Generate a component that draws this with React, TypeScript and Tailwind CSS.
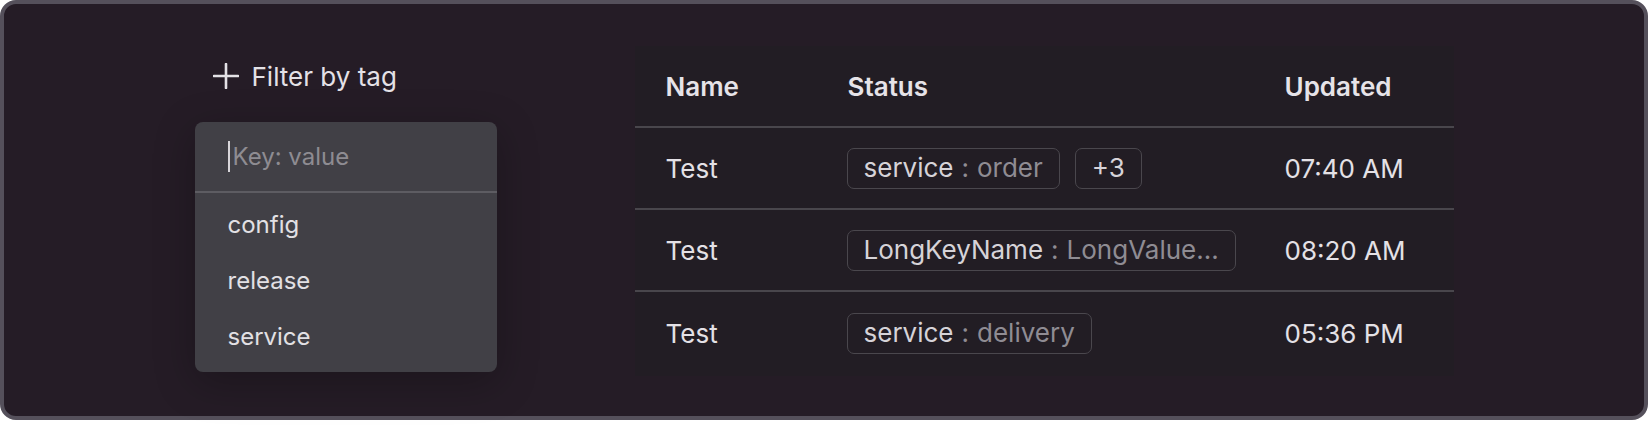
import React from 'react';

const rows = [
  { name: 'Test', tags: [{ key: 'service', value: 'order' }], more: 3, updated: '07:40 AM' },
  { name: 'Test', tags: [{ key: 'LongKeyName', value: 'LongValue...' }], more: 0, updated: '08:20 AM' },
  { name: 'Test', tags: [{ key: 'service', value: 'delivery' }], more: 0, updated: '05:36 PM' },
];

const options = ['config', 'release', 'service'];

function PlusIcon() {
  return (
    <svg width="26" height="26" viewBox="0 0 26 26" fill="none" className="shrink-0">
      <path d="M13 1v24M1 13h24" stroke="#e4e1e6" strokeWidth="2.6" strokeLinecap="round" />
    </svg>
  );
}

function Tag({ label, value }: { label: string; value?: string }) {
  return (
    <span className="inline-flex h-[41px] items-center gap-[8px] rounded-[7px] border-[1.5px] border-[#4a474d] px-[16px] text-[26px] leading-none">
      <span className="text-[#d6d3d8]">{label}</span>
      {value && (
        <>
          <span className="text-[#8f8c93]">:</span>
          <span className="text-[#8f8c93]">{value}</span>
        </>
      )}
    </span>
  );
}

export default function App() {
  return (
    <div className="h-[428px] w-[1648px] bg-white font-['Inter',sans-serif]">
      <div className="flex h-[420px] w-full justify-center gap-[138px] rounded-[16px] border-[4px] border-[#55505b] bg-[#251c26]">
        <div className="w-[302px] pt-[56px]">
          <button className="flex h-8 items-center gap-[13px] pl-[18px] text-[26px] text-[#e4e1e6]">
            <PlusIcon />
            Filter by tag
          </button>
          <div className="mt-[30px] h-[250px] rounded-[8px] bg-[#414046] shadow-[0_10px_40px_rgba(0,0,0,0.25)]">
            <div className="flex h-[71px] items-center border-b-2 border-[#5d5c62] pl-[33px] text-[24px]">
              <span className="mr-[3px] h-[31px] w-[2px] bg-[#d8d6da]" />
              <span className="text-[#8e8c92]">Key: value</span>
            </div>
            <ul className="pt-[4px]">
              {options.map((o) => (
                <li key={o} className="flex h-[56px] items-center pl-[33px] text-[24px] text-[#e2e0e4]">
                  {o}
                </li>
              ))}
            </ul>
          </div>
        </div>

        <div className="mt-[42px] h-[330px] w-[819px] bg-[#221d24]">
          <div className="grid h-[82px] grid-cols-[181px_438px_200px] items-center border-b-2 border-[#49464c] text-[26px] font-semibold text-[#e6e3e8]">
            <div className="pl-[31px]">Name</div>
            <div className="pl-[32px]">Status</div>
            <div className="pl-[31px]">Updated</div>
          </div>
          {rows.map((r, i) => (
            <div
              key={i}
              className={`grid h-[82px] grid-cols-[181px_438px_200px] items-center text-[26px] text-[#e4e1e6] ${i < rows.length - 1 ? 'border-b-2 border-[#49464c]' : ''}`}
            >
              <div className="pl-[31px]">{r.name}</div>
              <div className="flex items-center gap-[15px] pl-[31px]">
                {r.tags.map((t) => (
                  <Tag key={t.key} label={t.key} value={t.value} />
                ))}
                {r.more > 0 && <Tag label={`+${r.more}`} />}
              </div>
              <div className="pl-[31px]">{r.updated}</div>
            </div>
          ))}
        </div>
      </div>
    </div>
  );
}
